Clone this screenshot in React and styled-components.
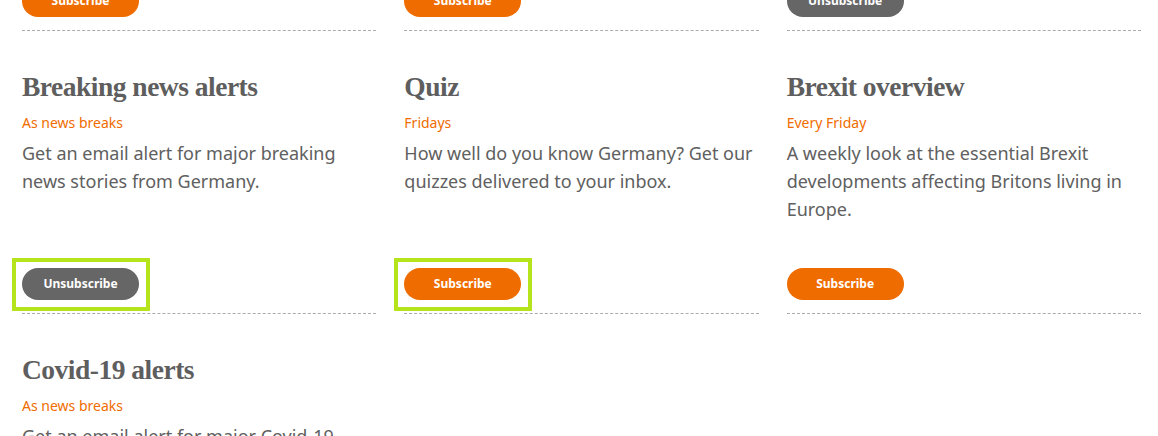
import React from "react";
import styled, { createGlobalStyle } from "styled-components";

const GlobalStyle = createGlobalStyle`
  html, body {
    margin: 0;
    padding: 0;
    height: 436px;
    overflow: hidden;
    background: #ffffff;
  }
  body {
    font-family: "Noto Sans", "Open Sans", sans-serif;
    color: #606060;
  }
`;

const Page = styled.main`
  margin-top: -224px;
  padding: 0 17px 0 22px;
`;

const Grid = styled.section`
  display: grid;
  grid-template-columns: repeat(3, 1fr);
  column-gap: 28px;
`;

const Card = styled.article`
  display: flex;
  flex-direction: column;
  padding: 39px 0 13px;
  border-bottom: 1px dashed #ababab;
`;

const Title = styled.h2`
  margin: 0;
  font-family: "Liberation Serif", "Times New Roman", serif;
  font-weight: 700;
  font-size: 27.5px;
  line-height: 34px;
  color: #5e5e5e;
  letter-spacing: -0.5px;
`;

const Frequency = styled.div`
  margin-top: 9px;
  font-size: 14px;
  line-height: 20px;
  color: #f06c00;
`;

const Description = styled.p`
  margin: 6px 0 0;
  font-size: 18px;
  line-height: 28px;
  color: #606060;
`;

const Actions = styled.div`
  margin-top: auto;
  padding-top: 45px;
  display: flex;
`;

const Button = styled.button`
  position: relative;
  width: 117px;
  height: 32px;
  border: none;
  border-radius: 16px;
  background: ${(p) => (p.$subscribed ? "#666666" : "#ef6c00")};
  color: #ffffff;
  font-family: "Noto Sans", "Open Sans", sans-serif;
  font-weight: 700;
  font-size: 12px;
  line-height: 32px;
  padding: 0;
  cursor: pointer;
  outline: none;

  &::after {
    content: "";
    display: ${(p) => (p.$highlighted ? "block" : "none")};
    position: absolute;
    inset: -10px -11px -11px -10px;
    border: 4px solid #b5e31c;
    pointer-events: none;
  }
`;

const newsletters = [
  {
    title: "Today's headlines",
    frequency: "Every weekday",
    description: "The most important news from Germany, every morning.",
    subscribed: false,
  },
  {
    title: "Weekly roundup",
    frequency: "Saturdays",
    description: "The best stories of the week about life in Germany.",
    subscribed: false,
  },
  {
    title: "Members' newsletter",
    frequency: "Weekly",
    description: "Exclusive updates for members of The Local.",
    subscribed: true,
  },
  {
    title: "Breaking news alerts",
    frequency: "As news breaks",
    description: "Get an email alert for major breaking news stories from Germany.",
    subscribed: true,
    highlighted: true,
  },
  {
    title: "Quiz",
    frequency: "Fridays",
    description: "How well do you know Germany? Get our quizzes delivered to your inbox.",
    subscribed: false,
    highlighted: true,
  },
  {
    title: "Brexit overview",
    frequency: "Every Friday",
    description:
      "A weekly look at the essential Brexit developments affecting Britons living in Europe.",
    subscribed: false,
  },
  {
    title: "Covid-19 alerts",
    frequency: "As news breaks",
    description: "Get an email alert for major Covid-19 news stories from Germany.",
    subscribed: false,
  },
];

export default function App() {
  return (
    <>
      <GlobalStyle />
      <Page>
        <Grid>
          {newsletters.map((n) => (
            <Card key={n.title}>
              <Title>{n.title}</Title>
              <Frequency>{n.frequency}</Frequency>
              <Description>{n.description}</Description>
              <Actions>
                <Button $subscribed={n.subscribed} $highlighted={n.highlighted}>
                  {n.subscribed ? "Unsubscribe" : "Subscribe"}
                </Button>
              </Actions>
            </Card>
          ))}
        </Grid>
      </Page>
    </>
  );
}
